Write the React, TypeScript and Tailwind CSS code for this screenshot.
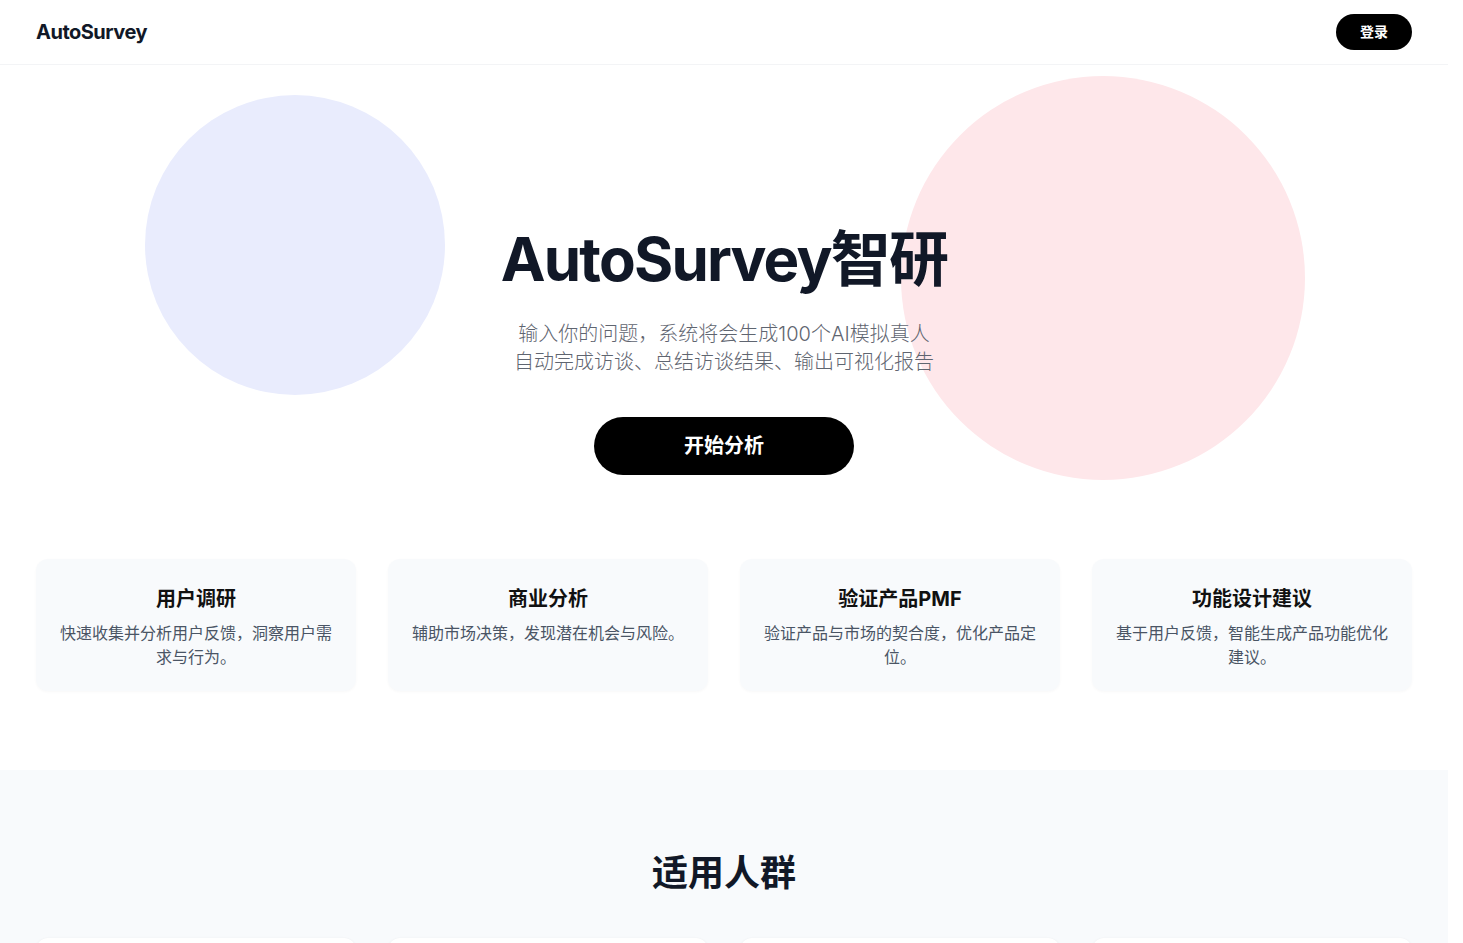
import React from 'react';

const features = [
  { title: '用户调研', desc: '快速收集并分析用户反馈，洞察用户需求与行为。' },
  { title: '商业分析', desc: '辅助市场决策，发现潜在机会与风险。' },
  { title: '验证产品PMF', desc: '验证产品与市场的契合度，优化产品定位。' },
  { title: '功能设计建议', desc: '基于用户反馈，智能生成产品功能优化建议。' },
];

const audiences = [
  { title: '产品经理', desc: '快速验证需求假设，明确产品方向。' },
  { title: '创业者', desc: '低成本完成市场调研，降低试错风险。' },
  { title: '市场研究员', desc: '高效获取用户洞察，生成可视化报告。' },
  { title: '设计师', desc: '理解用户偏好，指导体验设计决策。' },
];

const font = 'font-[Inter,"Noto_Sans_CJK_SC",sans-serif]';

export default function App() {
  return (
    <div className={`w-[1448px] min-h-screen bg-white text-[#111827] ${font}`}>
      <header className="h-[65px] flex items-center justify-between px-9 border-b border-gray-100 bg-white">
        <span className="text-xl font-bold tracking-tight text-[#111827]">AutoSurvey</span>
        <button className="h-9 px-6 rounded-full bg-black text-white text-sm font-bold">登录</button>
      </header>

      <section className="relative overflow-hidden">
        <div className="absolute top-[30px] left-[calc(50%-579px)] w-[300px] h-[300px] rounded-full bg-[#e9ecfd]" />
        <div className="absolute top-[11px] left-[calc(50%+177px)] w-[404px] h-[404px] rounded-full bg-[#fee7ea]" />

        <div className="relative z-10 flex flex-col items-center pt-[164px] text-center">
          <h1 className="text-6xl leading-none font-bold tracking-[-0.03em] text-[#111827]">AutoSurvey智研</h1>
          <p className="mt-[31px] text-xl leading-7 font-light text-[#5f6570]">
            输入你的问题，系统将会生成100个AI模拟真人
            <br />
            自动完成访谈、总结访谈结果、输出可视化报告
          </p>
          <button className="mt-[41px] w-[260px] h-[58px] rounded-full bg-black text-white text-xl font-bold">
            开始分析
          </button>
        </div>

        <div className="relative z-10 grid grid-cols-4 gap-8 px-9 pt-[84px] pb-[79px]">
          {features.map((f) => (
            <div key={f.title} className="rounded-xl bg-[#f8fafc] px-6 pt-[26px] pb-[22px] text-center shadow-[0_1px_3px_rgba(0,0,0,0.03)]">
              <h3 className="text-xl leading-7 font-bold text-[#111]">{f.title}</h3>
              <p className="mt-2 text-base leading-6 text-gray-600">{f.desc}</p>
            </div>
          ))}
        </div>
      </section>

      <section className="bg-[#f8fafc] px-9 pt-[83px] pb-20">
        <h2 className="text-4xl leading-10 font-bold text-center text-[#111827]">适用人群</h2>
        <div className="mt-[45px] grid grid-cols-4 gap-8">
          {audiences.map((a) => (
            <div key={a.title} className="rounded-xl bg-white p-6 text-center shadow-sm">
              <h3 className="text-xl leading-7 font-bold">{a.title}</h3>
              <p className="mt-2 text-base leading-6 text-gray-600">{a.desc}</p>
            </div>
          ))}
        </div>
      </section>
    </div>
  );
}
